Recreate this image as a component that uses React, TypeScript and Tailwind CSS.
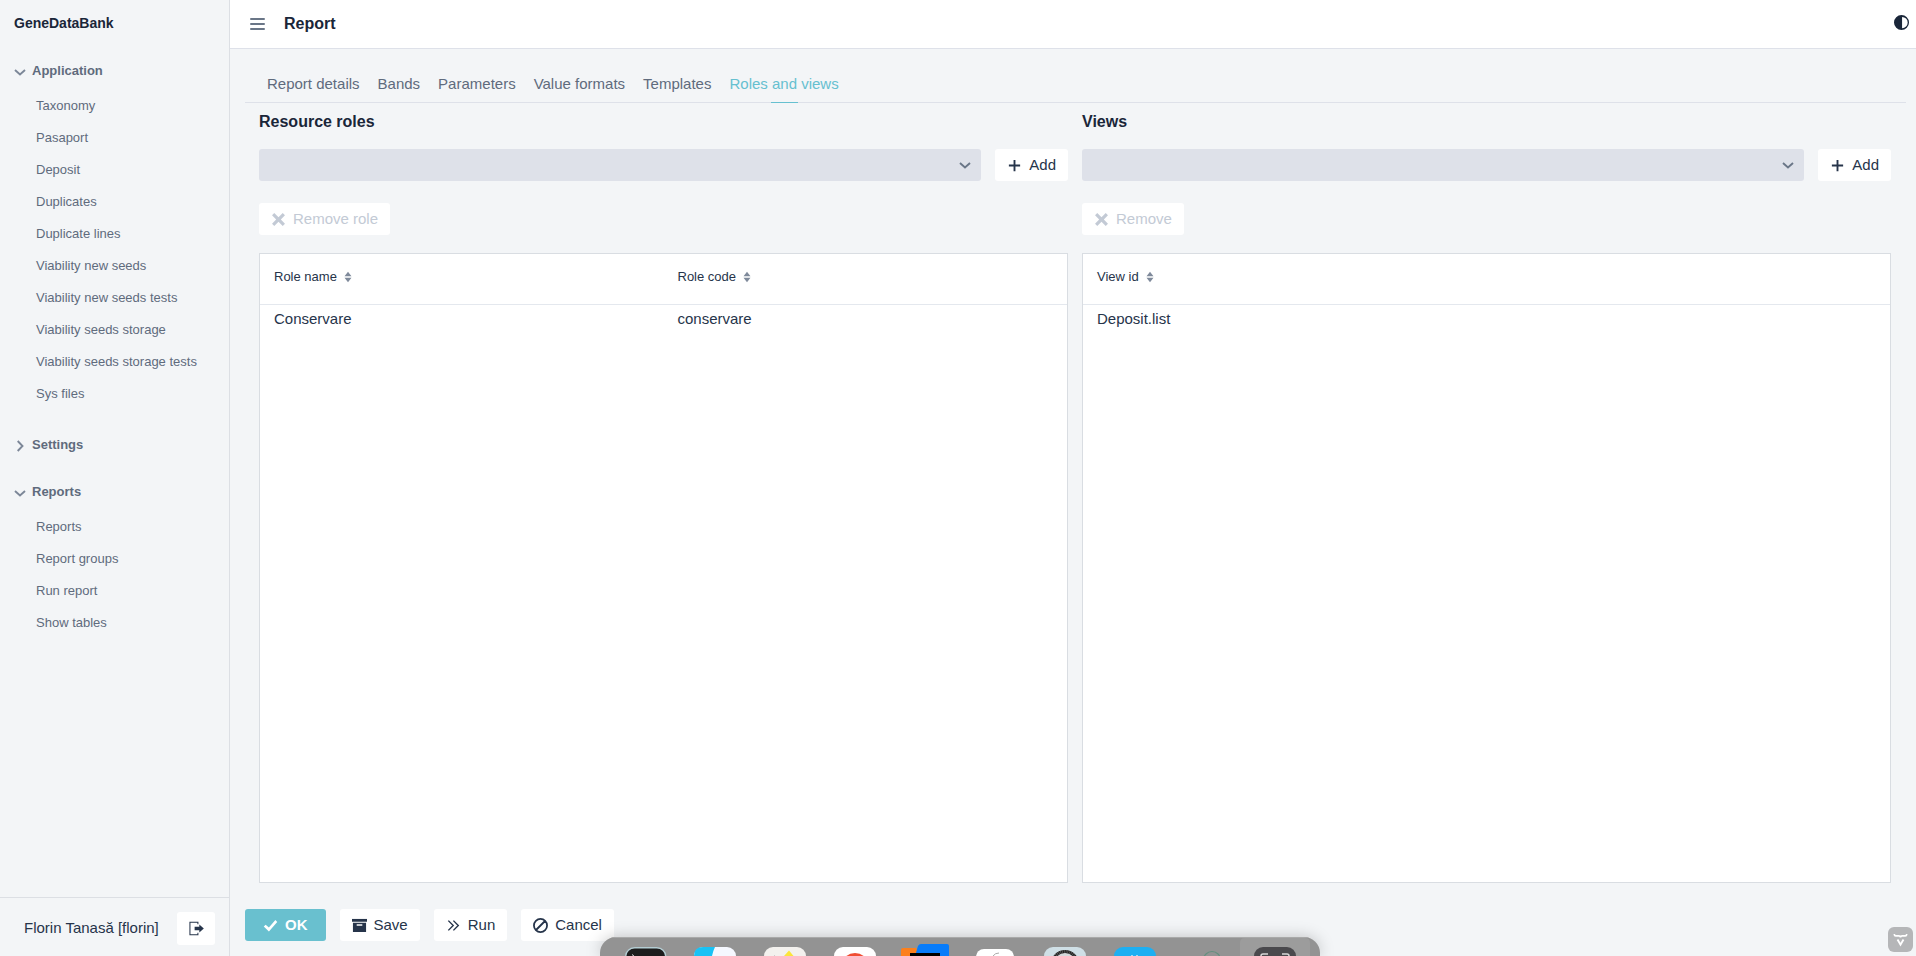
import { useState, type ReactNode } from "react";

const menuSections = [
  {
    title: "Application",
    open: true,
    items: [
      "Taxonomy",
      "Pasaport",
      "Deposit",
      "Duplicates",
      "Duplicate lines",
      "Viability new seeds",
      "Viability new seeds tests",
      "Viability seeds storage",
      "Viability seeds storage tests",
      "Sys files",
    ],
  },
  { title: "Settings", open: false, items: [] as string[] },
  {
    title: "Reports",
    open: true,
    items: ["Reports", "Report groups", "Run report", "Show tables"],
  },
];

const tabs = [
  "Report details",
  "Bands",
  "Parameters",
  "Value formats",
  "Templates",
  "Roles and views",
];

function Icon({ className = "size-[15px]", children }: { className?: string; children: ReactNode }) {
  return (
    <svg viewBox="0 0 16 16" fill="currentColor" aria-hidden="true" className={`shrink-0 ${className}`}>
      {children}
    </svg>
  );
}

const PlusIcon = () => (
  <Icon>
    <path d="M7 2h2v5h5v2H9v5H7V9H2V7h5z" />
  </Icon>
);

const CloseIcon = () => (
  <Icon>
    <path d="M1.1 3.500 3.500 1.100 8 5.500l4.500-4.400 2.400 2.400L10.500 8l4.400 4.500-2.400 2.400L8 10.500l-4.500 4.400-2.400-2.400L5.500 8z" />
  </Icon>
);

const CheckIcon = () => (
  <Icon>
    <path d="M15.2 4.2 13.2 2.2 6.3 10.2 2.8 7.1.8 9.1l5.5 5.2z" />
  </Icon>
);

const ArchiveIcon = () => (
  <Icon>
    <path d="M0 1h16v3H0z" />
    <path fillRule="evenodd" d="M1 5v10h14V5zm10 3.2H5V6.6h6z" />
  </Icon>
);

const RunIcon = () => (
  <Icon>
    <path
      d="M2.5 2.8 7.7 8l-5.2 5.2M7.9 2.8 13.1 8l-5.2 5.2"
      fill="none"
      stroke="currentColor"
      strokeWidth="1.5"
    />
  </Icon>
);

const BanIcon = () => (
  <Icon>
    <path
      d="M8 1a7 7 0 1 0 0 14A7 7 0 0 0 8 1ZM3.2 12.8l9.6-9.6"
      fill="none"
      stroke="currentColor"
      strokeWidth="1.9"
    />
  </Icon>
);

const SignOutIcon = () => (
  <Icon>
    <path d="M9.5 3.5V1.3H1v13.4h8.5v-2.2" fill="none" stroke="currentColor" strokeWidth="1.1" />
    <path d="M6 6.2h5V3.8L15.8 8 11 12.2V9.8H6z" />
  </Icon>
);

const ContrastIcon = () => (
  <Icon>
    <path fillRule="evenodd" d="M8 0a8 8 0 1 0 0 16A8 8 0 0 0 8 0Zm.6 14V2a6 6 0 0 1 0 12Z" />
  </Icon>
);

function Chevron({ open = true }: { open?: boolean }) {
  return (
    <svg viewBox="0 0 12 12" fill="none" stroke="currentColor" strokeWidth="1.9" aria-hidden="true" className="size-3 shrink-0">
      {open ? <path d="M1 4l5 4.5L11 4" /> : <path d="M3.7 1l4.8 5-4.8 5" />}
    </svg>
  );
}

function SortIcon() {
  return (
    <svg viewBox="0 0 8 12" fill="currentColor" aria-hidden="true" className="h-3 w-2 text-[#7f8a9b]">
      <path d="M4 .8 7.500 5.200h-7zM4 11.200.500 6.800h7z" />
    </svg>
  );
}

function Button({ icon, label, disabled }: { icon: ReactNode; label: string; disabled?: boolean }) {
  return (
    <button
      type="button"
      disabled={disabled}
      className="flex h-8 shrink-0 items-center gap-[7px] rounded-[3px] bg-white px-3 disabled:text-[#c3cad5]"
    >
      {icon}
      {label}
    </button>
  );
}

function Panel({
  title,
  removeLabel,
  columns,
  rows,
}: {
  title: string;
  removeLabel: string;
  columns: string[];
  rows: string[][];
}) {
  return (
    <section className="flex min-w-0 flex-1 flex-col">
      <h2 className="text-base leading-6 font-bold text-[#1a2639]">{title}</h2>
      <div className="mt-[15px] flex gap-[14px]">
        <div className="relative min-w-0 flex-1">
          <select aria-label={title} className="block h-8 w-full appearance-none rounded-[3px] bg-[#dee1e9] px-2">
            <option></option>
          </select>
          <span className="pointer-events-none absolute inset-y-0 right-[10px] flex items-center text-[#6a7687]">
            <Chevron />
          </span>
        </div>
        <Button icon={<PlusIcon />} label="Add" />
      </div>
      <div className="mt-[22px] flex">
        <Button icon={<CloseIcon />} label={removeLabel} disabled />
      </div>
      <div className="mt-[18px] flex-1 border border-[#d9dde2] bg-white">
        <table className="w-full table-fixed border-collapse text-left">
          <thead>
            <tr className="border-b border-[#e4e8ee]">
              {columns.map((column) => (
                <th key={column} className="h-[50px] px-[14px] pb-1 text-[13px] font-normal">
                  <button type="button" className="flex items-center gap-[7px]">
                    {column}
                    <SortIcon />
                  </button>
                </th>
              ))}
            </tr>
          </thead>
          <tbody>
            {rows.map((row) => (
              <tr key={row[0]}>
                {row.map((cell) => (
                  <td key={cell} className="h-[29px] px-[14px]">
                    {cell}
                  </td>
                ))}
              </tr>
            ))}
          </tbody>
        </table>
      </div>
    </section>
  );
}

function MenuSection({ title, items, open: initial }: { title: string; items: string[]; open: boolean }) {
  const [open, setOpen] = useState(initial);

  return (
    <div>
      <button
        type="button"
        aria-expanded={open}
        onClick={() => setOpen(!open)}
        className="flex h-[34px] w-full items-center gap-[6px] px-[14px] text-[13px] font-bold"
      >
        <span className="pt-px text-[#7c8798]">
          <Chevron open={open} />
        </span>
        {title}
      </button>
      {open && items.length > 0 && (
        <ul className="pt-[2px] pb-[5px]">
          {items.map((item) => (
            <li key={item}>
              <a href="#" className="flex h-8 items-center pr-4 pl-9 text-[13px]">
                {item}
              </a>
            </li>
          ))}
        </ul>
      )}
    </div>
  );
}

function Dock() {
  return (
    <div className="pointer-events-none fixed inset-x-0 bottom-0 flex justify-center pl-1">
      <div className="overflow-hidden rounded-t-2xl bg-[#939393] shadow-[0_0_16px_rgba(0,0,0,0.22)]">
        <svg viewBox="0 0 720 19" className="h-[19px] w-[720px]" aria-hidden="true">
          <path d="M0 .5h720" stroke="#a9a9a9" />
          <path d="M640 19V6q0-5 5-5h60q5 0 5 5v13z" fill="#9c9c9c" />
          {/* terminal */}
          <rect x="25.7" y="10.7" width="40" height="40" rx="9" fill="#1d1d1d" stroke="#b4cdd3" strokeWidth="1.4" />
          <path d="M32 17.5l2.5 2" stroke="#ddd" />
          {/* finder */}
          <rect x="94" y="10" width="42" height="42" rx="9" fill="#f5f8ff" />
          <path d="M94 19q0-9 9-9h12q-2 4-3 9z" fill="#19c2f5" />
          {/* drawing */}
          <rect x="164" y="10" width="42" height="42" rx="9" fill="#f3f1ee" />
          <path d="M184 19l5-5.500 4.500 5.500z" fill="#fbe53b" />
          <path d="M174 19l1-1" stroke="#ccc" />
          {/* browser */}
          <rect x="234" y="10" width="42" height="42" rx="9" fill="#fff" />
          <circle cx="255" cy="30" r="14" fill="#f04e33" />
          {/* ide */}
          <path d="M301 19v-6q0-2 2-2h13l4 8z" fill="#fc801d" />
          <path d="M315 19l3-10q1-2 3-2h26q2 0 2 2v10z" fill="#087cfa" />
          <rect x="310" y="16" width="30" height="4" fill="#000" />
          {/* white app */}
          <rect x="376" y="12" width="38" height="38" rx="8" fill="#fff" />
          <path d="M393 19q2-3 6-3" fill="none" stroke="#aaa" />
          {/* disk gauge */}
          <rect x="444" y="10" width="42" height="42" rx="9" fill="#cfdfe6" />
          <circle cx="465" cy="27" r="12.500" fill="#d5d9dc" stroke="#222" strokeWidth="3" />
          <circle cx="465" cy="27" r="12.500" fill="none" stroke="#777" strokeWidth="3" strokeDasharray=".5 1.300" />
          {/* blue app */}
          <rect x="514" y="10" width="42" height="42" rx="9" fill="#1daff2" />
          <path d="M531 18.500h2M536 18.500h2" stroke="#9bdcfa" />
          {/* ring */}
          <circle cx="612" cy="23" r="8.500" fill="none" stroke="#648f7f" strokeWidth="1.200" />
          {/* screenshot */}
          <rect x="654" y="10" width="42" height="42" rx="9" fill="#4a494d" />
          <path d="M661 19q0-2 2-2h5M689 19q0-2-2-2h-5" fill="none" stroke="#d8d8d8" strokeWidth="1.500" />
        </svg>
      </div>
    </div>
  );
}

export default function App() {
  const [activeTab, setActiveTab] = useState("Roles and views");

  return (
    <div className="flex h-screen bg-[#f3f5f7] font-['Liberation_Sans',Arial,sans-serif] text-[15px] leading-5 text-[#26344a]">
      <aside className="flex w-[230px] shrink-0 flex-col border-r border-[#dcdfe4] text-[#5f6b7d]">
        <h1 className="flex h-[46px] items-center px-[14px] text-[14px] font-bold text-[#1a2639]">GeneDataBank</h1>
        <nav className="flex flex-1 flex-col gap-[13px] pt-2">
          {menuSections.map((section) => (
            <MenuSection key={section.title} {...section} />
          ))}
        </nav>
        <div className="flex h-[59px] items-center justify-between border-t border-[#dcdfe4] pt-[2px] pr-[14px] pl-6 text-[#26344a]">
          <span>Florin Tanasă [florin]</span>
          <button
            type="button"
            aria-label="Log out"
            className="flex h-[33px] w-[38px] items-center justify-center rounded-[3px] bg-white"
          >
            <SignOutIcon />
          </button>
        </div>
      </aside>

      <div className="flex min-w-0 flex-1 flex-col">
        <header className="flex h-[49px] items-center border-b border-[#dee1e9] bg-white pr-[7px] pl-5 text-[#1a2639]">
          <button type="button" aria-label="Menu" className="text-[#6a7687]">
            <svg viewBox="0 0 15 12" className="h-3 w-[15px]" aria-hidden="true">
              <path d="M1 1h13M1 6h13M1 11h13" stroke="currentColor" strokeWidth="2" strokeLinecap="round" />
            </svg>
          </button>
          <h2 className="ml-[19px] text-base font-bold">Report</h2>
          <button type="button" aria-label="Switch theme" className="mb-[3px] ml-auto">
            <ContrastIcon />
          </button>
        </header>

        <main className="flex min-h-0 flex-1 flex-col pt-4 pr-[10px] pb-[15px] pl-[15px]">
          <div role="tablist" className="flex h-[38px] gap-[18px] border-b border-[#dee1e9] px-[22px]">
            {tabs.map((tab) => (
              <button
                key={tab}
                type="button"
                role="tab"
                aria-selected={tab === activeTab}
                onClick={() => setActiveTab(tab)}
                className="relative pt-px text-[#5f6b7d] aria-selected:text-[#66c0d0]"
              >
                {tab}
                {tab === activeTab && (
                  <span className="absolute inset-x-0 -bottom-px mx-auto h-px w-[27px] bg-[#66c0d0]" />
                )}
              </button>
            ))}
          </div>

          <div className="flex min-h-0 flex-1 gap-[14px] pt-[7px] pr-[15px] pl-[14px]">
            <Panel
              title="Resource roles"
              removeLabel="Remove role"
              columns={["Role name", "Role code"]}
              rows={[["Conservare", "conservare"]]}
            />
            <Panel title="Views" removeLabel="Remove" columns={["View id"]} rows={[["Deposit.list"]]} />
          </div>

          <div className="mt-[26px] flex gap-[14px]">
            <button
              type="button"
              className="flex h-8 items-center gap-[7px] rounded-[3px] bg-[#69c0cf] px-[18px] font-bold text-white"
            >
              <CheckIcon />
              OK
            </button>
            <Button icon={<ArchiveIcon />} label="Save" />
            <Button icon={<RunIcon />} label="Run" />
            <Button icon={<BanIcon />} label="Cancel" />
          </div>
        </main>
      </div>

      <Dock />
      <button
        type="button"
        aria-label="Development tools"
        className="fixed right-[3px] bottom-1 flex size-[25px] items-center justify-center rounded-md bg-[#b5b6b8] text-white"
      >
        <svg viewBox="0 0 16 16" fill="none" stroke="currentColor" strokeWidth="1.800" className="size-[15px]" aria-hidden="true">
          <path d="M1.500 2v.8q0 1.400 1.400 1.400h3.300q1.800 0 1.800 1.600 0-1.600 1.800-1.600h3.300q1.400 0 1.400-1.400V2" />
          <path d="M4.800 8 8 13.500 11.200 8" strokeWidth="2" />
        </svg>
      </button>
    </div>
  );
}
